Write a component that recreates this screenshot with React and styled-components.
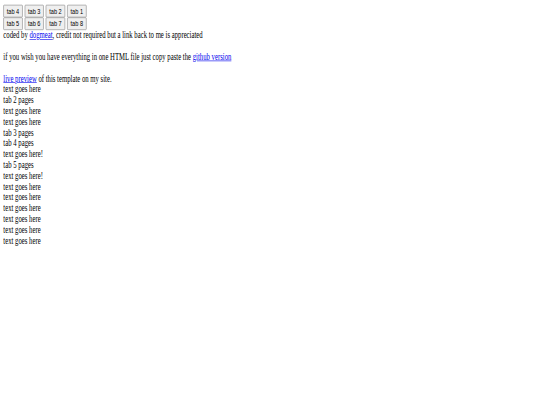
import React from 'react'
import styled, { createGlobalStyle } from 'styled-components'

const GlobalStyle = createGlobalStyle`
    html, body {
        margin: 0;
        padding: 0;
        background: #fff;
        overflow: hidden;
    }
`;

const Page = styled.div`
    width: 1280px;
    padding: 8px;
    box-sizing: border-box;
    transform: scale(0.42, 0.6);
    transform-origin: 0 0;
    font-family: "Liberation Serif", "Times New Roman", serif;
    font-size: 16px;
    color: #000;
    a {
        color: #0000ee;
        text-decoration: underline;
    }
`;

const TabRow = styled.div`
    display: flex;
    gap: 5px;
`;

const TabButton = styled.button`
    font-family: "Liberation Sans", Arial, sans-serif;
    font-size: 13.333px;
    padding: 1px 7px;
    background: #efefef;
    color: #000;
    border: 1px solid #767676;
    border-radius: 2px;
    line-height: normal;
    height: 21px;
`;

const Lines = styled.div`
    line-height: normal;
`;

const rows = [
    ['tab 4', 'tab 3', 'tab 2', 'tab 1'],
    ['tab 5', 'tab 6', 'tab 7', 'tab 8'],
]

const pages = [
    'text goes here',
    'tab 2 pages',
    'text goes here',
    'text goes here',
    'tab 3 pages',
    'tab 4 pages',
    'text goes here!',
    'tab 5 pages',
    'text goes here!',
    'text goes here',
    'text goes here',
    'text goes here',
    'text goes here',
    'text goes here',
    'text goes here',
]

function App() {
    return (
        <>
            <GlobalStyle />
            <Page>
                {rows.map((row, i) => (
                    <TabRow key={i}>
                        {row.map(t => <TabButton key={t}>{t}</TabButton>)}
                    </TabRow>
                ))}
                <Lines>
                    coded by <a href="#">dogmeat</a>, credit not required but a link back to me is appreciated
                    <br /><br />
                    if you wish you have everything in one HTML file just copy paste the <a href="#">github version</a>
                    <br /><br />
                    <a href="#">live preview</a> of this template on my site.
                    {pages.map((p, i) => <div key={i}>{p}</div>)}
                </Lines>
            </Page>
        </>
    )
}

export default App
